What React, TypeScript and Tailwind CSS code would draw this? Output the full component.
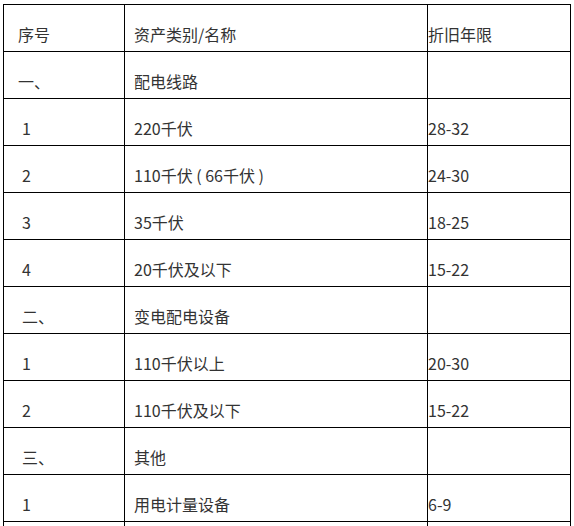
import React from "react";

type Row = { a: string; b: string; c: string; indent?: boolean };

const rows: Row[] = [
  { a: "序号", b: "资产类别/名称", c: "折旧年限" },
  { a: "一、", b: "配电线路", c: "" },
  { a: "1", b: "220千伏", c: "28-32", indent: true },
  { a: "2", b: "110千伏 ( 66千伏 )", c: "24-30", indent: true },
  { a: "3", b: "35千伏", c: "18-25", indent: true },
  { a: "4", b: "20千伏及以下", c: "15-22", indent: true },
  { a: "二、", b: "变电配电设备", c: "", indent: true },
  { a: "1", b: "110千伏以上", c: "20-30", indent: true },
  { a: "2", b: "110千伏及以下", c: "15-22", indent: true },
  { a: "三、", b: "其他", c: "", indent: true },
  { a: "1", b: "用电计量设备", c: "6-9", indent: true },
  { a: "", b: "", c: "" },
];

export default function App() {
  return (
    <div
      className="h-[526px] w-[574px] overflow-hidden bg-white pl-[3px] pt-[4px] text-[16px] text-[#333333]"
      style={{ fontFamily: '"Noto Sans CJK SC", "Noto Sans", sans-serif' }}
    >
      <div className="grid w-[568px] grid-cols-[120px_302px_142px] gap-[1px] bg-black p-[1px]">
        {rows.map((r, i) => (
          <React.Fragment key={i}>
            <div
              className={`flex h-[46px] items-start bg-white pt-[17px] leading-[24px] ${
                r.indent ? "pl-[18px]" : "pl-[14px]"
              }`}
            >
              {r.a}
            </div>
            <div className="flex h-[46px] items-start whitespace-pre bg-white pl-[9px] pt-[17px] leading-[24px]">
              {r.b}
            </div>
            <div className="flex h-[46px] items-start bg-white pl-[0px] pt-[17px] leading-[24px]">
              {r.c}
            </div>
          </React.Fragment>
        ))}
      </div>
    </div>
  );
}
